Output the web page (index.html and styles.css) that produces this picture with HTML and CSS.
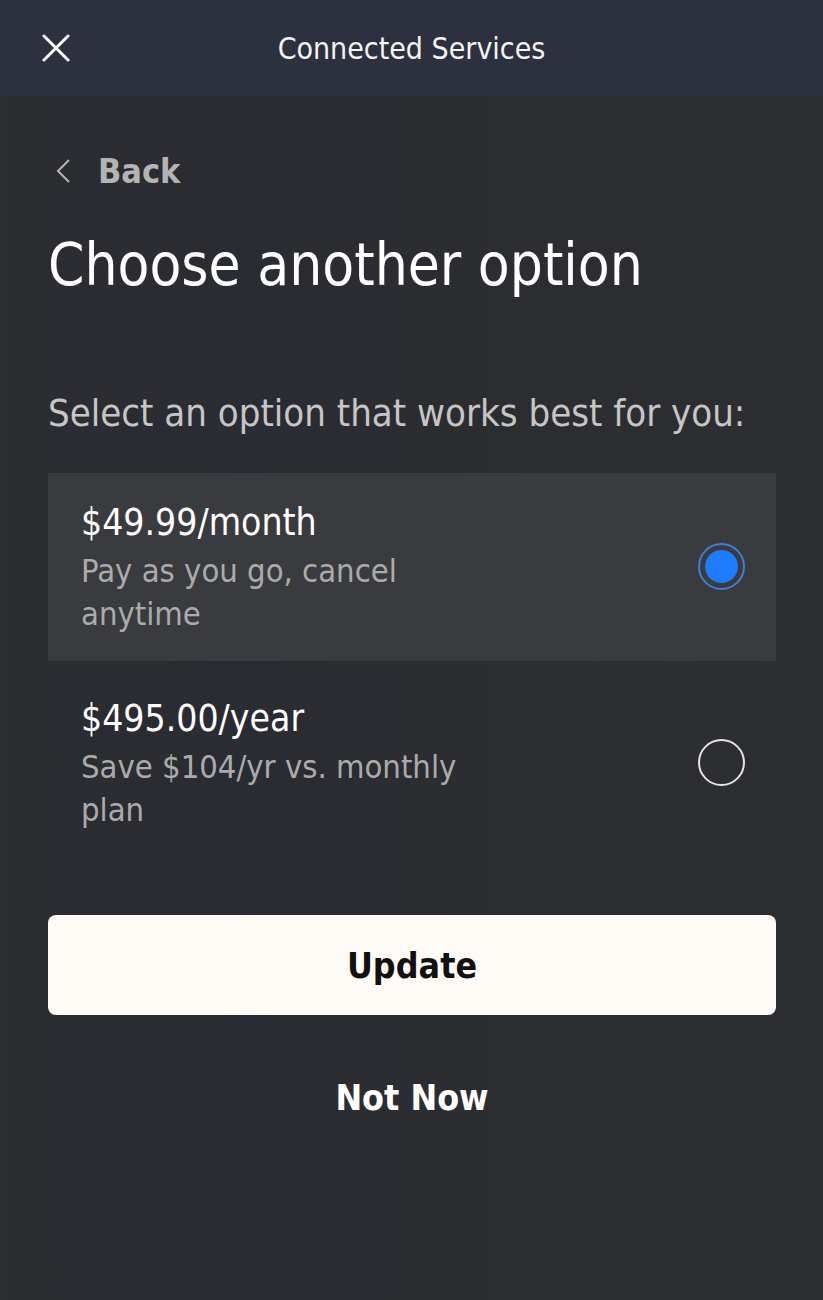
FILE: index.html
```html
<!DOCTYPE html>
<html lang="en">
<head>
<meta charset="utf-8">
<title>Connected Services</title>
<link rel="stylesheet" href="styles.css">
</head>
<body>
<header class="topbar">
  <button class="close" aria-label="Close">
    <svg width="28" height="28" viewBox="0 0 28 28"><path d="M2 2 L26 26 M26 2 L2 26" stroke="#ffffff" stroke-width="3" stroke-linecap="round"/></svg>
  </button>
  <div class="topbar-title">Connected Services</div>
</header>
<main class="content">
  <a class="back" href="#">
    <svg class="back-icon" width="16" height="26" viewBox="0 0 16 26"><path d="M14 2 L3 13 L14 24" fill="none" stroke="#b4b4b4" stroke-width="2"/></svg>
    <span>Back</span>
  </a>
  <h1 class="title">Choose another option</h1>
  <p class="subtitle">Select an option that works best for you:</p>
  <div class="options">
    <div class="option selected">
      <div class="option-text">
        <div class="price">$49.99/month</div>
        <div class="desc">Pay as you go, cancel<br>anytime</div>
      </div>
      <span class="radio on"><span class="dot"></span></span>
    </div>
    <div class="option second">
      <div class="option-text">
        <div class="price">$495.00/year</div>
        <div class="desc">Save $104/yr vs. monthly<br>plan</div>
      </div>
      <span class="radio"></span>
    </div>
  </div>
  <button class="update">Update</button>
  <button class="notnow">Not Now</button>
</main>
</body>
</html>
```
FILE: styles.css
```css
* { box-sizing: border-box; }
html, body { margin: 0; padding: 0; }
body {
  width: 823px;
  min-height: 1300px;
  background: linear-gradient(90deg, #2c2d31 0%, #2a2c33 30%, #2c2d30 60%, #2d2e31 100%);
  font-family: "DejaVu Sans Condensed", "Noto Sans", sans-serif;
  color: #ffffff;
}
.topbar {
  height: 96px;
  background: #2d303e;
  display: flex;
  align-items: center;
  justify-content: center;
  position: relative;
}
.close {
  position: absolute;
  left: 42px;
  top: 34px;
  width: 28px;
  height: 28px;
  padding: 0;
  border: 0;
  background: none;
  display: flex;
}
.topbar-title {
  font-size: 30px;
  color: #f4f4f4;
  margin-top: 0;
}
.content {
  padding: 0 47px 0 48px;
  display: flex;
  flex-direction: column;
}
.back {
  margin-top: 54px;
  display: flex;
  align-items: center;
  gap: 27px;
  text-decoration: none;
  color: #b4b4b4;
  font-size: 34px;
  font-weight: bold;
  height: 42px;
  padding-left: 7px;
}
.title {
  margin: 33px 0 0;
  font-size: 58px;
  font-weight: normal;
  line-height: 80px;
  color: #ffffff;
}
.subtitle {
  margin: 86px 0 0;
  font-size: 38px;
  line-height: 44px;
  color: #c6c6c6;
}
.options {
  margin-top: 38px;
  display: flex;
  flex-direction: column;
}
.option {
  height: 188px;
  padding: 28px 31px 0 33px;
  display: flex;
  align-items: flex-start;
  justify-content: space-between;
}
.option.second {
  padding-top: 36px;
}
.option.selected {
  background: #3a3b3f;
}
.price {
  font-size: 37px;
  line-height: 44px;
  color: #ffffff;
}
.desc {
  margin-top: 5px;
  font-size: 32.5px;
  line-height: 43px;
  color: #ababab;
}
.radio {
  width: 47px;
  height: 47px;
  border-radius: 50%;
  border: 2px solid #e4e4e4;
  display: flex;
  align-items: center;
  justify-content: center;
  flex: none;
  margin-top: 42px;
}
.radio.on {
  border-color: #3f7fd4;
}
.dot {
  width: 33px;
  height: 33px;
  border-radius: 50%;
  background: #1e7cff;
}
.update {
  margin-top: 66px;
  height: 100px;
  border: 0;
  border-radius: 8px;
  background: #fffcf8;
  color: #111111;
  font-family: inherit;
  font-size: 35.5px;
  font-weight: bold;
}
.notnow {
  margin-top: 48px;
  border: 0;
  background: none;
  color: #ffffff;
  font-family: inherit;
  font-size: 35.5px;
  font-weight: bold;
  height: 68px;
}
```
